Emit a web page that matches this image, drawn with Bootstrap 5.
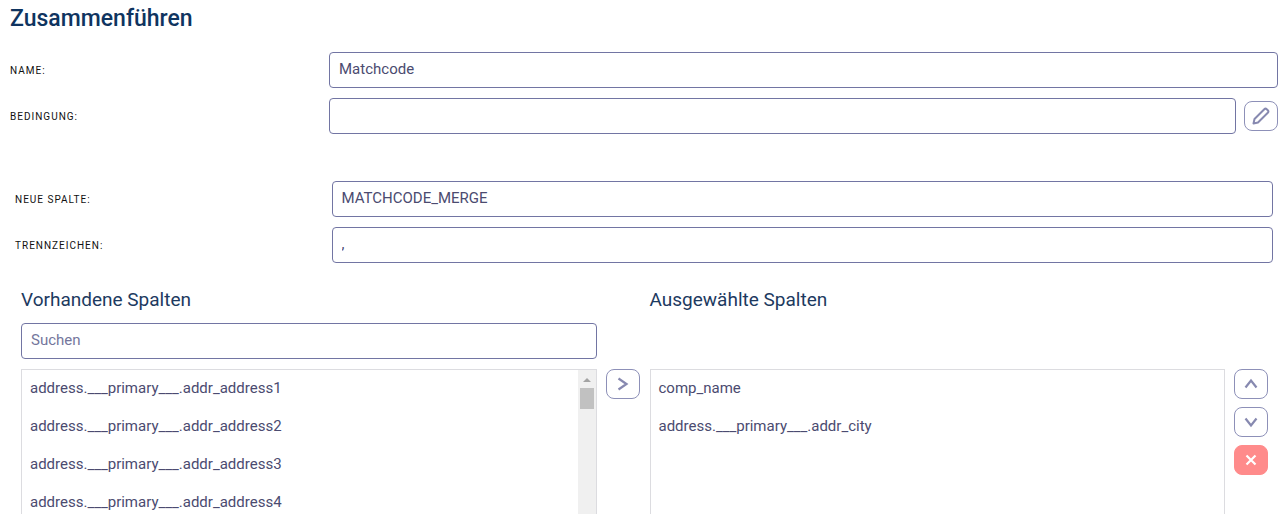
<!DOCTYPE html>
<html lang="de">
<head>
<meta charset="utf-8">
<meta name="viewport" content="width=device-width, initial-scale=1">
<title>Zusammenführen</title>
<link href="https://cdn.jsdelivr.net/npm/bootstrap@5.3.0/dist/css/bootstrap.min.css" rel="stylesheet">
<style>
  body { font-family: Roboto, "Liberation Sans", sans-serif; font-size: 15px; line-height: 20px; color: #4b4b70; background: #fff; }
  .page-title { font-size: 23px; line-height: 28px; font-weight: 500; color: #0f3460; }
  .pane-title { font-size: 19px; line-height: 24px; font-weight: 400; color: #1d3a5f; }
  .field-label { font-size: 10px; line-height: 16px; padding-top: 2px; letter-spacing: 1px; color: #111; text-transform: uppercase; }
  .field { height: 36px; padding: 0 9px 2px; font-size: 15px; line-height: 20px; color: #4b4b70; border: 1px solid #7275a3; border-radius: 4px; }
  .field:focus { color: #4b4b70; }
  .field::placeholder { color: #74769c; opacity: 1; }
  .form-main { padding: 5px 8px 0 10px; }
  .form-stack { display: grid; gap: 10px; }
  .form-main .form-stack { margin-top: 19px; }
  .form-merge { padding: 47px 13px 0 15px; }
  .form-stack .row { margin-right: -8px; }
  .form-stack .entry { padding-right: 8px; }
  .tool { width: 34px; height: 30px; padding: 0; border: 1px solid #8d90b8; border-radius: 8px; color: #8789b0; background: #fff; display: flex; align-items: center; justify-content: center; }
  .tool-delete { color: #fff; background: #ff8b8b; border-color: #ff8b8b; }
  .panes { padding: 25px 8px 13px 21px; }
  .pane-grid { display: grid; grid-template-columns: minmax(0, 1fr) 34px; column-gap: 9px; row-gap: 10px; padding-right: 10px; }
  .pane-grid .wide { grid-column: 1 / -1; }
  .pane-title { padding-bottom: 1px; }
  .tall-line { min-height: 36px; }
  .box { height: 145px; border: 1px solid #dcdce0; border-bottom: 0; overflow: hidden; }
  .box li { padding: 8px 8px 10px; line-height: 20px; white-space: nowrap; }
  .track { width: 18px; background: #f0f0f0; padding-top: 8px; }
  .thumb { width: 14px; height: 21px; background: #c1c1c1; margin-top: 6px; }
</style>
</head>
<body>
<main>
  <section class="form-main">
    <h1 class="page-title mb-0">Zusammenführen</h1>
    <div class="form-stack">
      <div class="row g-0 align-items-center">
        <label class="col-3 field-label" for="name">Name:</label>
        <div class="col-9 entry"><input class="form-control field" id="name" type="text" value="Matchcode"></div>
      </div>
      <div class="row g-0 align-items-center">
        <label class="col-3 field-label" for="cond">Bedingung:</label>
        <div class="col-9 entry d-flex align-items-center gap-2">
          <input class="form-control field" id="cond" type="text">
          <button class="tool flex-shrink-0" type="button" aria-label="Bearbeiten">
            <svg width="18" height="18" viewBox="0 0 18 18" fill="none" stroke="currentColor" stroke-width="2" stroke-linejoin="round"><path d="M1.500 16.500l1-4.500L12.300 2.200a1.700 1.700 0 0 1 2.400 0l1.100 1.100a1.700 1.700 0 0 1 0 2.400L6 15.500z"/></svg>
          </button>
        </div>
      </div>
    </div>
  </section>

  <section class="form-merge">
    <div class="form-stack">
      <div class="row g-0 align-items-center">
        <label class="col-3 field-label" for="newcol">Neue Spalte:</label>
        <div class="col-9 entry"><input class="form-control field" id="newcol" type="text" value="MATCHCODE_MERGE"></div>
      </div>
      <div class="row g-0 align-items-center">
        <label class="col-3 field-label" for="sep">Trennzeichen:</label>
        <div class="col-9 entry"><input class="form-control field" id="sep" type="text" value=","></div>
      </div>
    </div>
  </section>

  <section class="panes row g-0 mx-0">
    <div class="col-6 pane-grid">
      <h2 class="pane-title wide mb-0">Vorhandene Spalten</h2>
      <input class="form-control field" type="search" placeholder="Suchen" aria-label="Suchen">
      <span></span>
      <div class="box d-flex">
        <ul class="list-unstyled mb-0 flex-grow-1">
          <li>address.___primary___.addr_address1</li>
          <li>address.___primary___.addr_address2</li>
          <li>address.___primary___.addr_address3</li>
          <li>address.___primary___.addr_address4</li>
        </ul>
        <div class="track d-flex flex-column align-items-center" aria-hidden="true">
          <svg width="8" height="4" viewBox="0 0 8 4"><path d="M0 4L4 0l4 4z" fill="#a3a3a3"/></svg>
          <div class="thumb"></div>
        </div>
      </div>
      <div>
        <button class="tool" type="button" aria-label="Hinzufügen">
          <svg width="14" height="14" viewBox="0 0 14 14" fill="none" stroke="currentColor" stroke-width="2.200"><path d="M2.500 1.500L10.500 7l-8 5.500"/></svg>
        </button>
      </div>
    </div>
    <div class="col-6 pane-grid">
      <h2 class="pane-title wide mb-0">Ausgewählte Spalten</h2>
      <div class="wide tall-line"></div>
      <div class="box">
        <ul class="list-unstyled mb-0">
          <li>comp_name</li>
          <li>address.___primary___.addr_city</li>
        </ul>
      </div>
      <div class="d-flex flex-column gap-2">
        <button class="tool" type="button" aria-label="Nach oben">
          <svg width="14" height="14" viewBox="0 0 14 14" fill="none" stroke="currentColor" stroke-width="2.200"><path d="M1.500 10.500L7 3.500l5.500 7"/></svg>
        </button>
        <button class="tool" type="button" aria-label="Nach unten">
          <svg width="14" height="14" viewBox="0 0 14 14" fill="none" stroke="currentColor" stroke-width="2.200"><path d="M1.500 3.500l5.500 7 5.500-7"/></svg>
        </button>
        <button class="tool tool-delete" type="button" aria-label="Entfernen">
          <svg width="14" height="14" viewBox="0 0 14 14" fill="none" stroke="currentColor" stroke-width="2.200"><path d="M2.500 2.500l9 9M11.500 2.500l-9 9"/></svg>
        </button>
      </div>
    </div>
  </section>
</main>
<script src="https://cdn.jsdelivr.net/npm/bootstrap@5.3.0/dist/js/bootstrap.bundle.min.js"></script>
</body>
</html>
